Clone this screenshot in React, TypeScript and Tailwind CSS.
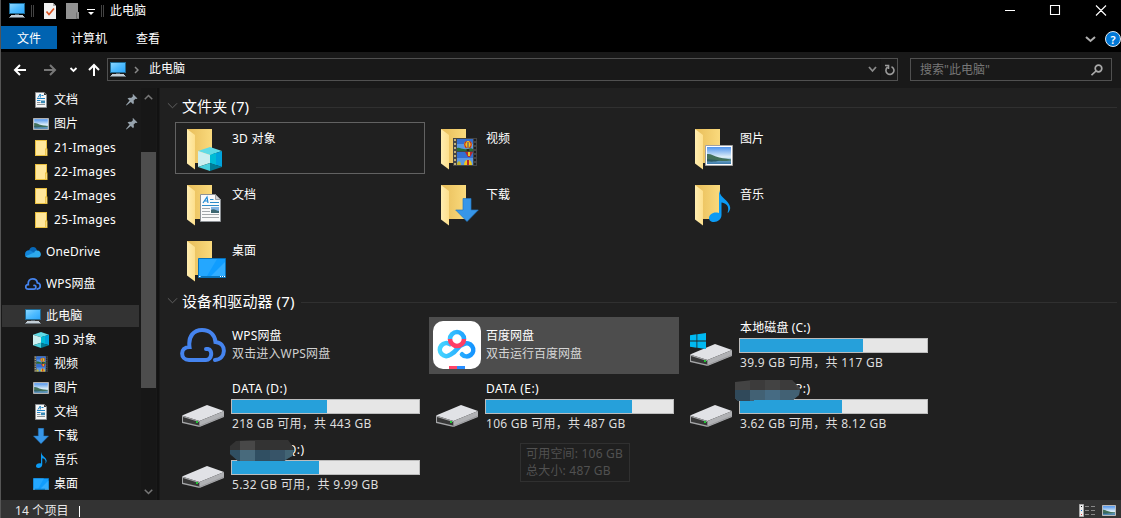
import React from "react";

type P = { className?: string };

const Cube = ({ className = "size-4" }: P) => (
  <svg className={className} viewBox="0 0 24 24">
    <path d="M12 0 24 4 12 8 0 4Z" fill="#5fdbe6" />
    <path d="M0 4 12 8V16L0 20Z" fill="#cbeff0" />
    <path d="M24 4 12 8V16L24 20Z" fill="#00a3dc" />
    <path d="M12 8 18 6V18L12 16Z" fill="#00bcd6" />
    <path d="M0 20 12 16V24Z" fill="#49cfdc" />
    <path d="M24 20 12 16V24Z" fill="#007d98" />
  </svg>
);

const Monitor = ({ className = "size-4" }: P) => (
  <svg className={className} viewBox="0 0 16 16">
    <defs>
      <linearGradient id="mon" x1="0" y1="0" x2="1" y2="1">
        <stop offset="0" stopColor="#8ad6ff" />
        <stop offset="0.5" stopColor="#4fbcff" />
        <stop offset="1" stopColor="#2ea6fb" />
      </linearGradient>
    </defs>
    <rect x="0" y="1" width="16" height="11" fill="#1f6a94" />
    <rect x="1" y="2" width="14" height="9" fill="url(#mon)" />
    <path d="M6 12h4v1H6z" fill="#56616a" />
    <path d="M2 13h12v1h1v1H1v-1h1z" fill="#c3ced6" />
    <path d="M0 15h16v.7H0z" fill="#8d9aa4" />
  </svg>
);

const Doc = ({ className = "size-4" }: P) => (
  <svg className={className} viewBox="0 0 21 28">
    <path d="M.5.5h15l5 5v22H.5z" fill="#fafafa" stroke="#8e9296" />
    <path d="M15.5.5v5h5z" fill="#cfd2d4" stroke="#8e9296" strokeWidth=".8" />
    <path d="M3 9 7 3l1 6M4.500 7H8" fill="none" stroke="#1e88d2" strokeWidth="1.2" />
    <path d="M10 5.500h3.500M10 8.500h9M2 11.500h17" stroke="#2d8bc9" />
    <path d="M2 14.500h8M2 17.500h8M2 20.500h17M2 23.500h17" stroke="#a3a7aa" />
    <path d="M11 13h8v6h-8z" fill="#84b5e4" />
    <path d="M11 16c3-2 5 1 8 1v2h-8z" fill="#3c6670" />
  </svg>
);

const SmallDoc = () => (
  <svg className="size-4" viewBox="0 0 16 16">
    <path d="M2.500.500h8.800l2.200 2.300v12.700h-11z" fill="#f7f7f7" stroke="#8b8f92" />
    <path d="M11 .5v2.600h2.600z" fill="#333" />
    <path d="M5 5.500 7.300 2v3.500M8.500 3.500h2M4 6.500h8M4 8.500h3.500" fill="none" stroke="#2085c7" />
    <path d="M4 10.500h3.500M4 12.500h8" stroke="#8b9296" />
    <path d="M8 8.500h4v2.700H8z" fill="#3989b5" />
  </svg>
);

const Picture = ({ className = "h-3 w-4" }: P) => (
  <svg className={className} viewBox="0 0 28 21" preserveAspectRatio="none">
    <defs>
      <linearGradient id="sky" x1="0" y1="0" x2="0" y2="1">
        <stop offset="0" stopColor="#4f94ed" />
        <stop offset="0.6" stopColor="#e2f1f8" />
        <stop offset="0.75" stopColor="#73aac9" />
        <stop offset="1" stopColor="#3b77a8" />
      </linearGradient>
    </defs>
    <path d="M.5.5h27v20H.5z" fill="#fff" stroke="#a1a1a1" />
    <path d="M2 2h24v17H2z" fill="url(#sky)" />
    <path d="M2 9c4-.5 6 1.500 9 2.500 4 1.500 9 2 15 3v1c-8 1-16 .5-24-.5z" fill="#42705a" />
    <path d="M2 14c5 1 8 .5 13 1.500-5 1.500-9 1.200-13 1z" fill="#2d5b62" />
  </svg>
);

const Balloon = ({ x, y }: { x: number; y: number }) => (
  <g transform={`translate(${x} ${y})`}>
    <ellipse cx="4" cy="3.6" rx="4" ry="3.7" fill="#f0c51a" />
    <path d="M2.500.2C0 2 .3 5 2.500 7M5.500.2C8 2 7.700 5 5.500 7" fill="none" stroke="#bd2426" strokeWidth="1.1" />
    <path d="M3.500 1h1v6h-1z" fill="#4b348a" />
    <path d="M2.800 8h2.400v2H2.800z" fill="#31251d" />
  </g>
);

const Film = ({ className = "size-4" }: P) => (
  <svg className={className} viewBox="0 0 24 28">
    <path d="M0 0h24v28H0z" fill="#454545" />
    <path d="M4 1h16v12H4zM4 14h16v13H4z" fill="#5c98e2" />
    <path d="M4 1h16v5H4zM4 14h16v6H4z" fill="#356fd0" />
    <path d="M4 10c3-1 4 1 7 1 4 1 6-2 9 0v2H4z" fill="#276d33" />
    <Balloon x={11} y={3} />
    <path d="M12 14h8l-3 5h-2z" fill="#b92a2b" />
    <path d="M15 14h2v4h-2z" fill="#e6c724" />
    <path d="M11 27c0-7 8-7 8 0z" fill="#efc61a" />
    <path d="M14 27v-5h2v5z" fill="#b52335" />
    <path d="M4 27c0-5 4-5 4 0z" fill="#c7b72c" />
    <path d="M2 1v27" stroke="#c1b07a" strokeWidth="2" strokeDasharray="2 2" />
    <path d="M22 1v27" stroke="#1f1f1f" strokeWidth="2" strokeDasharray="2 2" />
  </svg>
);

const Down = ({ className = "size-4" }: P) => (
  <svg className={className} viewBox="0 0 24 24" preserveAspectRatio="none">
    <path d="M8 .5h8V12h7.300L12 23.500.7 12H8z" fill="#3796e8" stroke="#2379c3" strokeWidth=".7" />
  </svg>
);

const Note = ({ className = "size-4" }: P) => (
  <svg className={className} viewBox="0 0 22 32" preserveAspectRatio="none">
    <path
      d="M10 0c1 6 5 8 8.500 12 4 5 3 8 .5 11-.4-.2-.4-.7-.2-1.200C20.500 16 17 13 12.500 12.500V25c0 4-3.500 7-7.500 7C1.500 32 0 30 0 28c0-3 3.500-6 8-5.500 1 .1 1.500.3 2 .5z"
      fill="#0c9bf4"
    />
  </svg>
);

const Desktop = ({ className = "h-3 w-4" }: P) => (
  <svg className={className} viewBox="0 0 28 20" preserveAspectRatio="none">
    <path d="M.5.5h27v19H.5z" fill="#109dff" stroke="#0871b8" />
    <path d="M1 1h18L9 18H1z" fill="#24a7ff" />
    <path d="M27 4v14H13z" fill="#32adff" />
    <path d="M1 18h26v1H1z" fill="#0876be" />
    <path d="M1 18h1.500v1H1zM22 18h1v1h-1zM24 18h1v1h-1zM26 18h1v1h-1z" fill="#fff" />
  </svg>
);

const SmallFolder = () => (
  <svg className="size-4" viewBox="0 0 16 16">
    <path d="M2 0h12v16H2z" fill="#e9bf3f" />
    <path d="M3 1h10v14H3z" fill="#ffe79c" />
    <path d="M12 8.500h2.500V16H12z" fill="#e9bf3f" />
    <path d="M12.800 9.500h1V15h-1z" fill="#ffe28b" />
  </svg>
);

const OneDrive = () => (
  <svg className="size-4" viewBox="0 0 16 16">
    <path d="M4 7C4.500 2 11 1.500 12 6.500L8 10z" fill="#0768b8" />
    <path d="M0 10.500C0 6 4.500 5.500 6.500 7.200L12 10l-8 3.500H3c-2 0-3-1.300-3-3z" fill="#1285da" />
    <path d="M12 6.600c5 0 5 6.900 1 6.900H3c-1.200 0-2-.5-2.500-1.200L9.200 8.400c.6-1.200 1.500-1.800 2.800-1.800z" fill="#2da9ec" />
  </svg>
);

const WpsCloud = ({ className = "size-4", width = 4 }: P & { width?: number }) => (
  <svg className={className} viewBox="0 0 46 34" fill="none" stroke="#4584ef" strokeWidth={width} strokeLinecap="round">
    <path d="M26 21h2c5 1 4 11-2 11H9C0 32-.5 19 9.500 19 8 8 14 2 22 2s13 5 13.500 12C47 15 46.500 31 35 32" />
  </svg>
);

const Folder = ({ children }: { children: React.ReactNode }) => (
  <div className="relative ml-[7px] size-12 shrink-0">
    <svg className="size-12" viewBox="0 0 48 48">
      <defs>
        <linearGradient id="fback">
          <stop offset="0" stopColor="#e8bd59" />
          <stop offset="1" stopColor="#fada7d" />
        </linearGradient>
        <linearGradient id="ffront">
          <stop offset="0" stopColor="#ffedb0" />
          <stop offset="1" stopColor="#fddf8c" />
        </linearGradient>
      </defs>
      <path d="M5 4h25v34H12z" fill="url(#fback)" />
      <path d="m5 4 8 6v34.500L5 38.500z" fill="url(#ffront)" />
    </svg>
    {children}
  </div>
);

const Drive = ({ win }: { win?: boolean }) => (
  <div className="relative ml-[7px] mt-[27px] h-[22px] w-[42px] shrink-0">
    <svg className="h-[22px] w-[42px]" viewBox="0 0 42 22">
      <path d="M0 10.500 25 0l17 6L17.500 16z" fill="#e1e2e6" />
      <path d="M17.500 16 42 6v6L17.500 22z" fill="#b0b1b4" />
      <path d="M0 10.500 17.500 16v6L0 18z" fill="#a4a5a7" />
      <path d="m1 12 16 5v3.500L1 16.800z" fill="#373737" />
      <path d="M14 16h2v2h-2z" fill="#23c335" />
      <path d="m17.500 21 24.500-10" stroke="#8b8c8e" strokeWidth=".6" />
    </svg>
    {win && (
      <svg className="absolute left-0 top-[-11px] size-4" viewBox="0 0 16 16">
        <path d="M0 2.200 6.500 1.300V7.500H0zM7.300 1.200 16 0v7.500H7.300zM0 8.500h6.500v6.200L0 13.800zM7.300 8.500H16V16l-8.700-1.200z" fill="#00b9f2" />
      </svg>
    )}
  </div>
);

const Chevron = ({ className }: P) => (
  <svg className={className} viewBox="0 0 12 8" fill="none" stroke="currentColor">
    <path d="m1 1 5 5 5-5" />
  </svg>
);

const Pin = () => (
  <svg className="ml-auto mr-[2px] size-3" viewBox="0 0 12 12">
    <path d="m7 0 4.500 4.500-1 .6-1-.3-2 2c.7 1.500.4 2.600-.4 3.400L4.800 8 .5 11.500 0 11l3.600-4.400L1.500 4.500c1.200-.9 2.300-1 3.600-.4l2-2L6.500 1z" fill="#97a3ad" />
  </svg>
);

type SideProps = { icon: React.ReactNode; label: string; top?: boolean; pin?: boolean; sel?: boolean };

const Side = ({ icon, label, top, pin, sel }: SideProps) => (
  <div className={`flex h-6 items-center ${top ? "pl-6" : "pl-8"}`}>
    <div className={`flex h-[22px] flex-1 items-center ${sel ? "-ml-[23px] mr-px bg-[#333] pl-[23px]" : ""}`}>
      <div className="mr-[5px] flex w-4 shrink-0 justify-center">{icon}</div>
      <span className={label.includes("-") ? "tracking-[0.27px]" : top ? "tracking-[0.15px]" : ""}>{label}</span>
      {pin && <Pin />}
    </div>
  </div>
);

const Group = ({ label }: { label: string }) => (
  <div className="flex h-[22px] items-center text-[15px] leading-[22px] tracking-[0.1px]">
    <Chevron className="ml-[7px] mr-[4px] h-2 w-[11px] text-[#686868]" />
    <span>{label}</span>
    <div className="ml-[7px] mr-1 mt-0.5 h-px flex-1 bg-[#303030]" />
  </div>
);

const Item = ({ label, children, sel }: { label: string; children: React.ReactNode; sel?: boolean }) => (
  <div className={`flex h-[52px] w-[250px] border pt-[2px] ${sel ? "border-[#626262]" : "border-transparent"}`}>
    <div className="-ml-px">
      <Folder>{children}</Folder>
    </div>
    <span className={`ml-[2px] mt-[5px] leading-[18px] ${sel ? "tracking-[0.25px]" : ""}`}>{label}</span>
  </div>
);

type DriveProps = { label: string; fill: number; text: string; win?: boolean; mask?: React.ReactNode };

const DriveTile = ({ label, fill, text, win, mask }: DriveProps) => (
  <div className="flex h-[57px] w-[250px]">
    <Drive win={win} />
    <div className="relative ml-[7px] flex w-[189px] flex-col">
      <span className={`mt-[2px] h-[18px] leading-[18px] ${mask ? "pl-[56px]" : "pl-px"} ${win ? "tracking-[0.15px]" : "tracking-[0.45px]"}`}>{label}</span>
      <div className="mt-px h-[15px] border border-[#bcbcbc] bg-[#e6e6e6]">
        <div className="h-full bg-[#26a0da]" style={{ width: fill }} />
      </div>
      <span className="whitespace-nowrap pl-px leading-[19px] tracking-[0.27px] text-[#dedede]">{text}</span>
      {mask}
    </div>
  </div>
);

const sideThisPC: [React.ReactNode, string][] = [
  [<Cube />, "3D 对象"],
  [<Film className="h-4 w-[14px]" />, "视频"],
  [<Picture />, "图片"],
  [<SmallDoc />, "文档"],
  [<Down />, "下载"],
  [<Note className="h-4 w-[11px]" />, "音乐"],
  [<Desktop />, "桌面"],
];

export default function App() {
  return (
    <div className="flex h-[518px] w-[1121px] flex-col overflow-hidden border-l border-[#555] bg-black font-['Noto_Sans','Noto_Sans_CJK_SC',sans-serif] text-[12px] text-white">
      <header className="flex h-[26px] shrink-0 items-start">
        <div className="flex h-[22px] flex-1 items-center pl-2">
          <Monitor className="-mt-0.5 size-4" />
          <div className="ml-[6px] h-3 w-[3px] border-x border-[#444]" />
          <svg className="ml-[10px] h-4 w-3" viewBox="0 0 12 16">
            <path d="M0 0h9l3 3v13H0z" fill="#f0f0f0" />
            <path d="M9 0v3h3z" fill="#aaa" />
            <path d="m2.500 8.500 2.500 3L10 5.500" fill="none" stroke="#dd5422" strokeWidth="1.700" />
          </svg>
          <svg className="ml-[10px] h-4 w-[13px]" viewBox="0 0 13 16">
            <path d="M0 0h12v9h1v7H0z" fill="#929292" />
            <path d="M10.500 9.500v6h2" fill="none" stroke="#6d6d6d" />
          </svg>
          <svg className="ml-[8px] mt-0.5 h-2 w-[8px]" viewBox="0 0 8 8">
            <path d="M0 1.500h8" stroke="#fff" />
            <path d="M1 4h6L4 7z" fill="#fff" />
          </svg>
          <div className="ml-[6px] h-3 w-[3px] border-x border-[#444]" />
          <span className="ml-[6px]">此电脑</span>
        </div>
        <svg className="mr-[12px] h-[21px] w-[104px]" viewBox="0 0 104 21" fill="none" stroke="#fff">
          <path d="M0 10.500h10M45.500 5.500h9v9h-9zM91 5.500l10 10m0-10-10 10" strokeWidth="1.100" />
        </svg>
      </header>
      <nav className="flex h-[26px] shrink-0 items-start leading-[25px]">
        <span className="h-[23px] w-14 bg-[#0063b1] text-center leading-[25px]">文件</span>
        <span className="ml-[14px]">计算机</span>
        <span className="ml-[29px]">查看</span>
        <svg className="ml-auto mr-[9px] mt-[10px] h-[7px] w-[11px]" viewBox="0 0 11 7" fill="none" stroke="#b0b0b0" strokeWidth="2">
          <path d="m1 1 4.500 4L10 1" />
        </svg>
        <span className="mt-[5px] flex size-4 items-center justify-center rounded-full border border-[#e2e8ee] bg-[#0078d7] text-[11px] font-semibold leading-none">?</span>
      </nav>
      <div className="flex h-9 shrink-0 items-start bg-[#191919] pt-[6px]">
        <svg className="h-6 w-[106px]" viewBox="0 0 106 24" fill="none" stroke="#fff" strokeWidth="2">
          <path d="M25 12H14m5-5-5 5 5 5" />
          <path d="M43 12h11m-5-5 5 5-5 5" stroke="#777" />
          <path d="m69.500 10 3 3 3-3" strokeWidth="1.800" />
          <path d="M93 18V7m-5 5 5-5 5 5" />
        </svg>
        <div className="flex h-[23px] w-[791px] items-center border border-[#505050]">
          <Monitor className="-mt-0.5 ml-[2px] size-4" />
          <svg className="ml-[8px] h-2 w-[5px]" viewBox="0 0 5 8" fill="none" stroke="#888" strokeWidth="1.500">
            <path d="m1 1 3 3-3 3" />
          </svg>
          <span className="ml-[10px] -mt-0.5">此电脑</span>
          <svg className="ml-auto h-[7px] w-[9px]" viewBox="0 0 9 7" fill="none" stroke="#8a8a8a" strokeWidth="1.800">
            <path d="m1 1 3.500 4L8 1" />
          </svg>
          <div className="ml-[3px] h-full w-px bg-[#151515]" />
          <svg className="ml-[4px] mr-[2px] h-3 w-[10px]" viewBox="0 0 10 12" fill="none" stroke="#9b9b9b" strokeWidth="1.600">
            <path d="M6.500 2.700A4 4 0 1 1 2.500 3.200M0 1.500h3.500V5" />
          </svg>
        </div>
        <div className="ml-[12px] flex h-[23px] w-[202px] items-center border border-[#505050] text-[#777]">
          <span className="ml-[9px]">搜索"此电脑"</span>
          <svg className="ml-auto mr-[8px] size-3" viewBox="0 0 12 12" fill="none" stroke="#aaa" strokeWidth="1.700">
            <circle cx="7.500" cy="4.500" r="3.300" />
            <path d="M5 7 .5 11.200" />
          </svg>
        </div>
      </div>
      <div className="flex h-[412px] shrink-0">
        <aside className="flex w-[159px] bg-[#191919]">
          <div className="w-[139px] text-[12px]">
            <Side icon={<SmallDoc />} label="文档" pin />
            <Side icon={<Picture />} label="图片" pin />
            <Side icon={<SmallFolder />} label="21-Images" />
            <Side icon={<SmallFolder />} label="22-Images" />
            <Side icon={<SmallFolder />} label="24-Images" />
            <Side icon={<SmallFolder />} label="25-Images" />
            <div className="h-2" />
            <Side top icon={<OneDrive />} label="OneDrive" />
            <div className="h-2" />
            <Side top icon={<WpsCloud width={5} />} label="WPS网盘" />
            <div className="h-2" />
            <Side top sel icon={<Monitor />} label="此电脑" />
            {sideThisPC.map(([icon, label]) => (
              <Side key={label} icon={icon} label={label} />
            ))}
          </div>
          <div className="ml-px flex w-[15px] flex-col items-center bg-[#171717]">
            <Chevron className="mt-[6px] h-[6px] w-[9px] rotate-180 stroke-2 text-[#777]" />
            <div className="mt-[52px] h-[236px] w-full bg-[#4d4d4d]" />
            <Chevron className="mt-[101px] h-[6px] w-[9px] stroke-2 text-[#777]" />
          </div>
          <div className="ml-[1px] w-[2px] bg-[#121212]" />
        </aside>
        <main className="min-w-0 flex-1 bg-[#202020] pt-[7px]">
          <Group label="文件夹 (7)" />
          <div className="ml-[15px] mt-[5px] grid w-[758px] grid-cols-3 gap-1">
            <Item label="3D 对象" sel>
              <Cube className="absolute left-4 top-[22px] size-6" />
            </Item>
            <Item label="视频">
              <Film className="absolute left-[17px] top-[13px] h-7 w-6" />
            </Item>
            <Item label="图片">
              <Picture className="absolute left-[15px] top-5 h-[21px] w-7" />
            </Item>
            <Item label="文档">
              <Doc className="absolute left-[18px] top-[13px] h-7 w-[21px]" />
            </Item>
            <Item label="下载">
              <Down className="absolute left-[19px] top-[17px] h-6 w-6" />
            </Item>
            <Item label="音乐">
              <Note className="absolute left-[19px] top-[9px] h-8 w-[22px]" />
            </Item>
            <Item label="桌面">
              <Desktop className="absolute left-4 top-[21px] h-5 w-7" />
            </Item>
          </div>
          <div className="mt-[4px]">
            <Group label="设备和驱动器 (7)" />
          </div>
          <div className="ml-[15px] mt-[5px] grid w-[758px] grid-cols-3 gap-1">
            <div className="flex h-[57px] w-[250px] items-start">
              <WpsCloud className="ml-[5px] mt-[11px] h-[34px] w-[46px]" />
              <div className="ml-[6px] mt-[10px] leading-[18px] tracking-[0.15px]">
                <div>WPS网盘</div>
                <div className="text-[#d0d0d0]">双击进入WPS网盘</div>
              </div>
            </div>
            <div className="flex h-[57px] w-[250px] items-start bg-[#4d4d4d]">
              <svg className="ml-1 mt-1 size-12" viewBox="0 0 48 48" fill="none">
                <defs>
                  <linearGradient id="pan" gradientUnits="userSpaceOnUse" x1="6" y1="0" x2="42" y2="0">
                    <stop offset="0" stopColor="#45d5ff" />
                    <stop offset="1" stopColor="#1392ff" />
                  </linearGradient>
                </defs>
                <rect width="48" height="48" rx="10" fill="#fff" />
                <path d="M29 33.300A6.500 6.500 0 1 0 30.500 23.200Q27 24 24 28T17.500 33.600A6.500 6.500 0 1 1 17 23.200" stroke="url(#pan)" strokeWidth="4.600" strokeLinecap="round" />
                <path d="M17 18a7 7 0 0 1 14 0" stroke="url(#pan)" strokeWidth="4.600" />
                <path d="M17 18a7 7 0 0 0 14 0" stroke="#ff3e65" strokeWidth="4.600" />
                <path d="M16 45h8v3h-8z" fill="#ff4567" />
                <path d="M24 45h8v3h-8z" fill="#268dff" />
              </svg>
              <div className="ml-[5px] mt-[10px] leading-[18px]">
                <div>百度网盘</div>
                <div className="text-[#d6d6d6]">双击运行百度网盘</div>
              </div>
            </div>
            <DriveTile win label="本地磁盘 (C:)" fill={123} text="39.9 GB 可用，共 117 GB" />
            <DriveTile label="DATA (D:)" fill={95} text="218 GB 可用，共 443 GB" />
            <DriveTile label="DATA (E:)" fill={146} text="106 GB 可用，共 487 GB" />
            <DriveTile
              label="P:)"
              fill={102}
              text="3.62 GB 可用，共 8.12 GB"
              mask={
                <svg className="absolute left-[-4px] top-[2px] h-[21px] w-[65px]" viewBox="0 0 65 21">
                  <path d="M0 2 18 0h39l8 8-1 7-6 5H19v1H3l-3-3z" fill="#434343" />
                  <path d="M15 0h15v10H15zM45 0h12l6 10H45z" fill="#3c3b3b" />
                  <path d="M0 10h65l-1 5-6 5H19v1H3l-3-3z" fill="#426174" />
                  <path d="M0 10h15v11H3l-3-3z" fill="#30495a" />
                  <path d="M30 10h15v10H30z" fill="#466b83" />
                </svg>
              }
            />
            <DriveTile
              label="Q:)"
              fill={87}
              text="5.32 GB 可用，共 9.99 GB"
              mask={
                <svg className="absolute left-[-1px] top-[1px] h-[21px] w-[64px]" viewBox="0 0 64 21">
                  <path d="m6 1 14-1h38l6 8-2 8-8 5H8l-8-7V6z" fill="#333" />
                  <path d="M10 1h15v9H10z" fill="#484848" />
                  <path d="M0 10h64l-2 6-8 5H8l-8-7z" fill="#304f62" />
                  <path d="M10 10h15v11H10z" fill="#486a7c" />
                  <path d="M40 10h15v10H40z" fill="#375468" />
                  <path d="M55 10h9l-2 6-7 4z" fill="#426474" />
                </svg>
              }
            />
            <div className="ml-[91px] mt-[4px] h-[39px] w-[110px] whitespace-nowrap border border-[#303030] bg-[#1f1f1f] pl-[5px] pt-px leading-[17px] tracking-[0.2px] text-[#515151]">
              <div>可用空间: 106 GB</div>
              <div>总大小: 487 GB</div>
            </div>
          </div>
        </main>
      </div>
      <footer className="flex h-[18px] shrink-0 items-start bg-[#333] text-[#e8e8e8]">
        <span className="ml-[14px] mt-[4px] leading-[14px] tracking-[0.15px]">14 个项目</span>
        <div className="ml-[10px] mt-[6px] h-[11px] w-px bg-white" />
        <svg className="ml-auto mr-[7px] mt-[4px] h-[13px] w-[16px]" viewBox="0 0 16 13">
          <path d="M.5.500h4v12h-4z" fill="#eee" stroke="#aaa" />
          <path d="M2 2h1v1H2z" fill="#111" />
          <path d="M2 6h1v1H2z" fill="#1773d2" />
          <path d="M2 10h1v1H2z" fill="#e13838" />
          <path d="M6 2.500h4m2 0h4M6 6.500h4m2 0h4M6 10.500h4m2 0h4" stroke="#888" />
        </svg>
        <Picture className="mr-[5px] mt-[5px] h-[11px] w-[14px]" />
      </footer>
    </div>
  );
}
